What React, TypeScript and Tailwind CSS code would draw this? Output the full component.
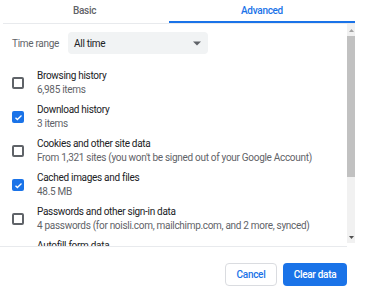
const rows = [
  { title: "Browsing history", sub: "6,985 items", checked: false },
  { title: "Download history", sub: "3 items", checked: true },
  { title: "Cookies and other site data", sub: "From 1,321 sites (you won't be signed out of your Google Account)", checked: false },
  { title: "Cached images and files", sub: "48.5 MB", checked: true },
  { title: "Passwords and other sign-in data", sub: "4 passwords (for noisli.com, mailchimp.com, and 2 more, synced)", checked: false },
  { title: "Autofill form data", sub: "", checked: false },
];

const Checkbox = ({ checked }: { checked: boolean }) =>
  checked ? (
    <div className="w-[12px] h-[12px] shrink-0 rounded-[2px] bg-[#1a73e8] flex items-center justify-center">
      <svg width="9" height="9" viewBox="0 0 24 24" fill="none" stroke="white" strokeWidth="3.5">
        <path d="M4 12.5l5 5L20 6.5" />
      </svg>
    </div>
  ) : (
    <div className="w-[12px] h-[12px] shrink-0 rounded-[2px] border-2 border-[#5f6368]" />
  );

const App = () => {
  return (
    <div className="w-[369px] h-[301px] bg-white overflow-hidden font-['Roboto',sans-serif] tracking-[-0.3px]">
      <div className="flex w-[355px] h-[23px] text-[10px] font-medium">
        <div className="w-[169px] flex justify-center pt-[3px] text-[#5f6368]">Basic</div>
        <div className="flex-1 flex justify-center pt-[3px] text-[#1a73e8] border-b-2 border-[#1a73e8]">Advanced</div>
      </div>
      <div className="ml-[3px] w-[352px] h-px bg-[#e8eaed]" />
      <div className="flex h-[222px]">
        <div className="w-[347px] overflow-hidden pl-[12px]">
          <div className="flex items-center gap-[9px] mt-[8px] h-[22px]">
            <span className="text-[10px] text-[#5f6368]">Time range</span>
            <div className="w-[140px] h-[22px] rounded-[4px] bg-[#f1f3f4] flex items-center justify-between px-[6px] text-[10px] text-[#202124]">
              <span>All time</span>
              <svg width="8" height="5" viewBox="0 0 10 5" className="mr-[1px]">
                <path d="M0 0h10L5 5z" fill="#5f6368" />
              </svg>
            </div>
          </div>
          <div className="mt-[15px] flex flex-col gap-[6px]">
            {rows.map((r) => (
              <div key={r.title} className="flex items-center h-[28px]">
                <div className="w-[25px] shrink-0">
                  <Checkbox checked={r.checked} />
                </div>
                <div className="flex flex-col text-[10px] leading-[14px] whitespace-nowrap">
                  <span className="h-[14px] text-[#202124]">{r.title}</span>
                  <span className="h-[14px] text-[#5f6368]">{r.sub}</span>
                </div>
              </div>
            ))}
          </div>
        </div>
        <div className="w-[8px] flex flex-col bg-[#f1f1f1] h-[219px]">
          <div className="h-[12px] flex items-center justify-center">
            <svg width="5" height="3" viewBox="0 0 10 6"><path d="M0 6h10L5 0z" fill="#a3a3a3" /></svg>
          </div>
          <div className="h-[141px] bg-[#c1c1c1]" />
          <div className="flex-1" />
          <div className="h-[12px] flex items-center justify-center">
            <svg width="5" height="3" viewBox="0 0 10 6"><path d="M0 0h10L5 6z" fill="#505050" /></svg>
          </div>
        </div>
      </div>
      <div className="w-[347px] h-px bg-[#e8eaed]" />
      <div className="w-[347px] flex justify-end gap-[6px] mt-[16px]">
        <button className="w-[52px] h-[23px] rounded-[4px] border border-[#dadce0] bg-white text-[#1a73e8] text-[10px] font-medium">
          Cancel
        </button>
        <button className="w-[64px] h-[23px] rounded-[4px] bg-[#1a73e8] text-white text-[10px] font-medium">
          Clear data
        </button>
      </div>
    </div>
  );
};

export default App;
